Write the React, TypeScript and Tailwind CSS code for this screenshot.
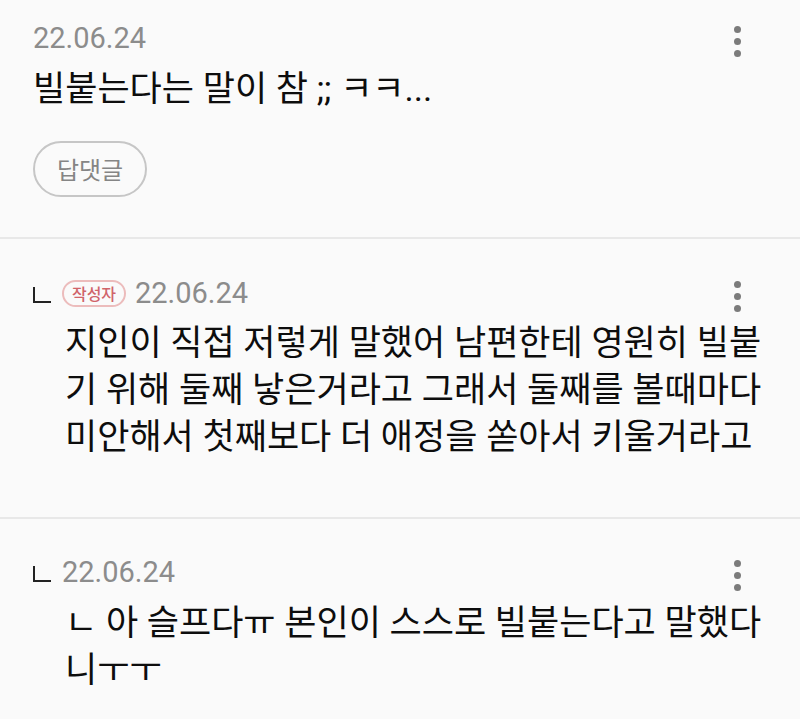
import React from "react";

const Dots = () => (
  <div className="flex flex-col items-center gap-[5px] mt-[6px] mr-[59px]">
    <span className="block w-[7px] h-[7px] rounded-full bg-[#7b7b7b]" />
    <span className="block w-[7px] h-[7px] rounded-full bg-[#7b7b7b]" />
    <span className="block w-[7px] h-[7px] rounded-full bg-[#7b7b7b]" />
  </div>
);

const ReplyMark = () => (
  <span className="block w-[18px] h-[16px] border-l-2 border-b-2 border-[#222222] mt-[4px] mr-[11px]" />
);

const Date = () => (
  <span className="text-[29px] leading-[36px] text-[#8c8c8c] font-['Roboto','Noto_Sans_CJK_KR',sans-serif]">
    22.06.24
  </span>
);

const Body = ({ lines }: { lines: string[] }) => (
  <div className="text-[35px] leading-[47px] font-normal text-[#0d0d0d] font-['Roboto','Noto_Sans_CJK_KR',sans-serif] whitespace-nowrap">
    {lines.map((l, i) => (
      <div key={i}>{l}</div>
    ))}
  </div>
);

export default function App() {
  return (
    <div className="w-[800px] h-[719px] overflow-hidden bg-[#fafafa] font-['Roboto','Noto_Sans_CJK_KR',sans-serif]">
      {/* Comment 1 */}
      <div className="pl-[33px] pt-[20px] pb-[40px]">
        <div className="flex items-start justify-between h-[36px]">
          <Date />
          <Dots />
        </div>
        <div className="mt-[10px]">
          <Body lines={["빌붙는다는 말이 참 ;; ㅋㅋ..."]} />
        </div>
        <button className="mt-[28px] w-[114px] h-[56px] rounded-full border-2 border-[#c6c6c6] flex items-center justify-center text-[24px] font-normal text-[#858585] font-['Noto_Sans_CJK_KR',sans-serif]">
          답댓글
        </button>
      </div>
      <div className="h-[2px] bg-[#e8e8e8]" />

      {/* Comment 2 */}
      <div className="pl-[33px] pt-[36px] pb-[56px]">
        <div className="flex items-start justify-between h-[36px]">
          <div className="flex items-center h-[36px]">
            <ReplyMark />
            <span className="flex items-center justify-center w-[64px] h-[27px] rounded-full border-2 border-[#ecbcbc] text-[16px] font-medium leading-none text-[#d0646a] font-['Noto_Sans_CJK_KR',sans-serif] mr-[9px]">
              작성자
            </span>
            <Date />
          </div>
          <Dots />
        </div>
        <div className="mt-[9px] pl-[32px]">
          <Body
            lines={[
              "지인이 직접 저렇게 말했어 남편한테 영원히 빌붙",
              "기 위해 둘째 낳은거라고 그래서 둘째를 볼때마다",
              "미안해서 첫째보다 더 애정을 쏟아서 키울거라고",
            ]}
          />
        </div>
      </div>
      <div className="h-[2px] bg-[#e8e8e8]" />

      {/* Comment 3 */}
      <div className="pl-[33px] pt-[35px]">
        <div className="flex items-start justify-between h-[36px]">
          <div className="flex items-center h-[36px]">
            <ReplyMark />
            <Date />
          </div>
          <Dots />
        </div>
        <div className="mt-[10px] pl-[32px]">
          <Body lines={["ㄴ 아 슬프다ㅠ 본인이 스스로 빌붙는다고 말했다", "니ㅜㅜ"]} />
        </div>
      </div>
    </div>
  );
}
